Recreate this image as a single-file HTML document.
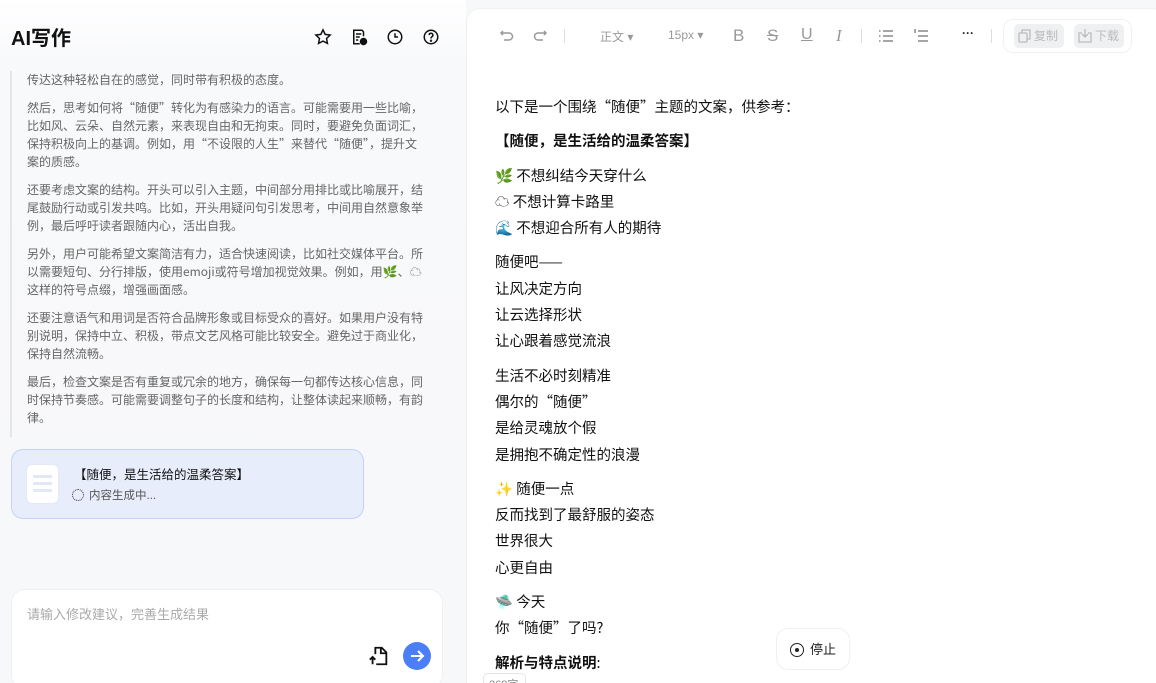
<!DOCTYPE html>
<html><head><meta charset="utf-8"><style>
*{margin:0;padding:0;box-sizing:border-box}
html,body{width:1156px;height:683px;overflow:hidden}
body{background:#f7f8fa;font-family:"Liberation Sans","Noto Sans CJK SC",sans-serif;position:relative}
.left{position:absolute;left:0;top:0;width:466px;height:683px;background:linear-gradient(#fff 0,#f8f9fb 60px,#f7f8fa 100%)}
.title{position:absolute;left:11px;top:22px;font-size:20px;font-weight:bold;color:#111}
.ic{position:absolute;top:28px}
.think{position:absolute;left:10px;top:71px;width:417px;border-left:2px solid #e3e5e8;padding-left:15px;font-size:12px;line-height:18px;color:#666;font-family:"Noto Sans CJK SC","Liberation Sans",sans-serif}
.think p{margin-bottom:10px}
.card{position:absolute;left:11px;top:449px;width:353px;height:70px;background:#e8edfb;border:1px solid #c4d3f7;border-radius:12px}
.doc{position:absolute;left:15px;top:15px;width:31px;height:38px;background:#fff;border-radius:5px;box-shadow:0 0 2px #dde}
.doc i{position:absolute;left:6px;width:19px;height:3px;background:#e3e8f7}
.input{position:absolute;left:11px;top:589px;width:432px;height:100px;background:#fff;border-radius:14px;border:1px solid #eef0f2}
.right{position:absolute;left:466px;top:8px;width:700px;height:690px;background:#fff;border:1px solid #eef0f2;border-radius:14px}
.tb{position:absolute;top:28px;font-size:12px;color:#999}
.content{position:absolute;left:495px;top:94px;font-size:14.5px;color:#111;line-height:26.3px;font-family:"Noto Sans CJK SC","Liberation Sans",sans-serif}
.content p{margin-bottom:8px}
b{font-weight:bold}
</style></head><body>
<div class="left">
<div class="title">AI写作</div>
<svg class="ic" style="left:314px" width="18" height="18" viewBox="0 0 24 24" fill="none" stroke="#111" stroke-width="2"><path d="M12 2.5l2.9 6 6.6.9-4.8 4.6 1.2 6.5L12 17.4l-5.9 3.1 1.2-6.5L2.5 9.4l6.6-.9z"/></svg>
<svg class="ic" style="left:350px" width="18" height="18" viewBox="0 0 24 24" fill="none" stroke="#111" stroke-width="2"><path d="M13 21H5V3h11l2 2v6M8 8h7M8 12h5M8 16h3"/><circle cx="18" cy="18" r="4" fill="#111"/></svg>
<svg class="ic" style="left:386px" width="18" height="18" viewBox="0 0 24 24" fill="none" stroke="#111" stroke-width="2"><circle cx="12" cy="12" r="9"/><path d="M12 7v5h4"/></svg>
<svg class="ic" style="left:422px" width="18" height="18" viewBox="0 0 24 24" fill="none" stroke="#111" stroke-width="2"><circle cx="12" cy="12" r="9"/><path d="M9.5 9.5a2.5 2.5 0 1 1 3.5 2.3c-.7.4-1 1-1 1.7v.5"/><circle cx="12" cy="17" r=".6"/></svg>
<div class="think">
<p>传达这种轻松自在的感觉，同时带有积极的态度。</p>
<p>然后，思考如何将“随便”转化为有感染力的语言。可能需要用一些比喻，比如风、云朵、自然元素，来表现自由和无拘束。同时，要避免负面词汇，保持积极向上的基调。例如，用“不设限的人生”来替代“随便”，提升文案的质感。</p>
<p>还要考虑文案的结构。开头可以引入主题，中间部分用排比或比喻展开，结尾鼓励行动或引发共鸣。比如，开头用疑问句引发思考，中间用自然意象举例，最后呼吁读者跟随内心，活出自我。</p>
<p>另外，用户可能希望文案简洁有力，适合快速阅读，比如社交媒体平台。所以需要短句、分行排版，使用emoji或符号增加视觉效果。例如，用🌿、☁这样的符号点缀，增强画面感。</p>
<p>还要注意语气和用词是否符合品牌形象或目标受众的喜好。如果用户没有特别说明，保持中立、积极，带点文艺风格可能比较安全。避免过于商业化，保持自然流畅。</p>
<p>最后，检查文案是否有重复或冗余的地方，确保每一句都传达核心信息，同时保持节奏感。可能需要调整句子的长度和结构，让整体读起来顺畅，有韵律。</p>
</div>
<div class="card"><div class="doc"><i style="top:10px"></i><i style="top:17px"></i><i style="top:24px"></i></div>
<div style="position:absolute;left:62px;top:14px;font-size:12.5px;color:#111">【随便，是生活给的温柔答案】</div>
<div style="position:absolute;left:60px;top:37px;font-size:11.5px;color:#555"><span style="display:inline-block;width:12px;height:12px;border:1.5px dotted #333;border-radius:50%;vertical-align:-2px;margin-right:5px"></span>内容生成中...</div></div>
<div class="input"><div style="position:absolute;left:15px;top:14px;font-size:13px;color:#aaa">请输入修改建议，完善生成结果</div>
<svg style="position:absolute;left:356px;top:55px" width="22" height="22" viewBox="0 0 24 24" fill="none" stroke="#111" stroke-width="2"><path d="M9 21h11V8l-5-5H8v7M14 3v6h6M5 21v-8M2 16l3-3 3 3"/></svg>
<div style="position:absolute;left:391px;top:52px;width:28px;height:28px;border-radius:50%;background:#4c7ff7"><svg width="28" height="28" viewBox="0 0 28 28" fill="none" stroke="#fff" stroke-width="2"><path d="M8 14h12M15 9l5 5-5 5"/></svg></div></div>
</div>
<div class="right"></div>
<svg class="tb" style="left:499px;top:28px" width="16" height="16" viewBox="0 0 16 16" fill="none" stroke="#999" stroke-width="1.5"><path d="M4 3L2 5l2 2M2 5h8a3.5 3.5 0 0 1 0 7H5"/></svg>
<svg class="tb" style="left:532px;top:28px" width="16" height="16" viewBox="0 0 16 16" fill="none" stroke="#999" stroke-width="1.5"><path d="M12 3l2 2-2 2M14 5H6a3.5 3.5 0 0 0 0 7h5"/></svg>
<div style="position:absolute;left:564px;top:29px;width:1px;height:14px;background:#ddd"></div>
<div class="tb" style="left:600px">正文 ▾</div>
<div class="tb" style="left:668px">15px ▾</div>
<div class="tb" style="left:733px;font-size:17px;top:26px">B</div>
<div class="tb" style="left:767px;font-size:17px;top:26px;text-decoration:line-through">S</div>
<div class="tb" style="left:801px;font-size:16px;top:26px;text-decoration:underline">U</div>
<div class="tb" style="left:836px;font-size:17px;top:26px;font-style:italic;font-family:'Liberation Serif'">I</div>
<div style="position:absolute;left:861px;top:29px;width:1px;height:14px;background:#ddd"></div>
<svg class="tb" style="left:878px;top:28px" width="16" height="16" viewBox="0 0 16 16" stroke="#888" stroke-width="1.5"><path d="M5 3h10M5 8h10M5 13h10M1 3h1.5M1 8h1.5M1 13h1.5"/></svg>
<svg class="tb" style="left:913px;top:28px" width="16" height="16" viewBox="0 0 16 16" stroke="#888" stroke-width="1.5"><path d="M5 3h10M5 8h10M5 13h10M2 1v4"/></svg>
<div class="tb" style="left:962px;color:#222;font-weight:bold;top:26px">···</div>
<div style="position:absolute;left:991px;top:29px;width:1px;height:14px;background:#ddd"></div>
<div style="position:absolute;left:1003px;top:19px;width:129px;height:34px;border:1px solid #eef0f2;border-radius:10px"></div>
<div style="position:absolute;left:1014px;top:24px;width:50px;height:24px;background:#eef0f2;border-radius:5px;font-size:12px;color:#bbb;line-height:24px;padding-left:20px">复制</div>
<div style="position:absolute;left:1074px;top:24px;width:50px;height:24px;background:#eef0f2;border-radius:5px;font-size:12px;color:#bbb;line-height:24px;padding-left:21px">下载</div>
<svg style="position:absolute;left:1018px;top:29px" width="14" height="14" viewBox="0 0 14 14" fill="none" stroke="#bbb" stroke-width="1.3"><rect x="1" y="4" width="8" height="9" rx="1"/><path d="M4 4V1h8v9H9"/></svg>
<svg style="position:absolute;left:1078px;top:29px" width="14" height="14" viewBox="0 0 14 14" fill="none" stroke="#bbb" stroke-width="1.3"><path d="M4 4H1v9h12V4h-3M7 0v8M4 5l3 3 3-3"/></svg>
<div class="content">
<p>以下是一个围绕“随便”主题的文案，供参考：</p>
<p><b>【随便，是生活给的温柔答案】</b></p>
<p>🌿 不想纠结今天穿什么<br>☁ 不想计算卡路里<br>🌊 不想迎合所有人的期待</p>
<p>随便吧——<br>让风决定方向<br>让云选择形状<br>让心跟着感觉流浪</p>
<p>生活不必时刻精准<br>偶尔的“随便”<br>是给灵魂放个假<br>是拥抱不确定性的浪漫</p>
<p>✨ 随便一点<br>反而找到了最舒服的姿态<br>世界很大<br>心更自由</p>
<p>🛸 今天<br>你“随便”了吗?</p>
<p><b>解析与特点说明</b>:</p>
</div>
<div style="position:absolute;left:776px;top:628px;width:74px;height:42px;background:#fff;border:1px solid #eef0f2;border-radius:12px;font-size:13px;color:#222;line-height:42px;padding-left:33px">停止
<span style="position:absolute;left:13px;top:14px;width:14px;height:14px;border:1.5px solid #222;border-radius:50%"></span><span style="position:absolute;left:18px;top:19px;width:4px;height:4px;background:#222;border-radius:50%"></span></div>
<div style="position:absolute;left:483px;top:673px;width:43px;height:20px;border:1px solid #e5e5e5;border-radius:5px;background:#fff;font-size:11px;color:#888;padding:2px 0 0 5px">269字</div>
</body></html>
